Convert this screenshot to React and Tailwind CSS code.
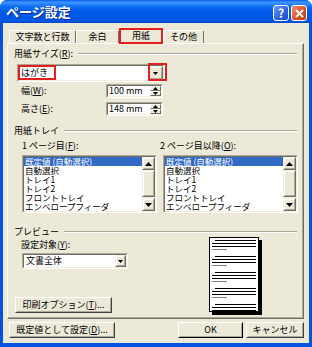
import React from "react";

const FONT = "font-['Noto_Sans_CJK_JP','Noto_Sans',sans-serif]";

const trayItems = [
  "既定値 (自動選択)",
  "自動選択",
  "トレイ1",
  "トレイ2",
  "フロントトレイ",
  "エンベロープフィーダ",
];

function U({ children }) {
  return <span className="underline underline-offset-1">{children}</span>;
}

function ArrowDown() {
  return (
    <svg width="7" height="4" viewBox="0 0 7 4">
      <path d="M0 0h7L3.5 4z" fill="#000" />
    </svg>
  );
}

function ArrowUp() {
  return (
    <svg width="7" height="4" viewBox="0 0 7 4">
      <path d="M0 4h7L3.5 0z" fill="#000" />
    </svg>
  );
}

function Sunken({ className = "", children }) {
  return (
    <div className={`shrink-0 border border-t-[#aca899] border-l-[#aca899] border-r-white border-b-white ${className}`}>
      <div className="flex h-full w-full border border-t-[#716f64] border-l-[#716f64] border-r-[#f1efe2] border-b-[#f1efe2] bg-white">
        {children}
      </div>
    </div>
  );
}

function Raised({ className = "", children }) {
  return (
    <div className={`shrink-0 border border-t-[#f1efe2] border-l-[#f1efe2] border-r-[#716f64] border-b-[#716f64] bg-[#ece9d8] ${className}`}>
      <div className="flex h-full w-full items-center justify-center border border-t-white border-l-white border-r-[#aca899] border-b-[#aca899]">
        {children}
      </div>
    </div>
  );
}

function Button({ className = "", children }) {
  return (
    <div className={`flex shrink-0 items-center justify-center border border-t-white border-l-white bg-[#ece9d8] ${className}`}>
      <div className="flex h-full w-full items-center justify-center border border-t-[#ece9d8] border-l-[#ece9d8] border-r-[#aca899] border-b-[#aca899] text-[9px] leading-[10px]">
        {children}
      </div>
    </div>
  );
}

function GroupHeader({ children }) {
  return (
    <div className="flex h-[10px] items-center">
      <span className="whitespace-nowrap pr-[5px] text-[9px] leading-[10px]">{children}</span>
      <div className="h-[2px] flex-1 border-t border-b border-t-[#aca899] border-b-white" />
    </div>
  );
}

function Spin({ value }) {
  return (
    <Sunken className="h-[14px] w-[57px]">
      <div className="flex-1 pl-[1px] text-[9px] leading-[10px]">{value}</div>
      <div className="flex w-[11px] flex-col">
        <div className="flex h-1/2 items-center justify-center border border-t-white border-l-white border-r-[#716f64] border-b-[#716f64] bg-[#ece9d8]">
          <svg width="5" height="3" viewBox="0 0 5 3">
            <path d="M0 3h5L2.5 0z" fill="#000" />
          </svg>
        </div>
        <div className="flex h-1/2 items-center justify-center border border-t-white border-l-white border-r-[#716f64] border-b-[#716f64] bg-[#ece9d8]">
          <svg width="5" height="3" viewBox="0 0 5 3">
            <path d="M0 0h5L2.5 3z" fill="#000" />
          </svg>
        </div>
      </div>
    </Sunken>
  );
}

function ListBox() {
  return (
    <Sunken className="h-[58px] w-[135px]">
      <div className="flex-1 overflow-hidden">
        {trayItems.map((t, i) => (
          <div
            key={t}
            className={`h-[9px] whitespace-nowrap pl-[1px] text-[8.5px] leading-[9px] ${i === 0 ? "bg-[#316ac5] text-white" : ""}`}
          >
            {t}
          </div>
        ))}
      </div>
      <div className="flex w-[13px] flex-col bg-[#f4f3ee]">
        <Raised className="h-[13px]">
          <ArrowUp />
        </Raised>
        <Raised className="h-[27px]" />
        <div className="flex-1" />
        <Raised className="h-[13px]">
          <ArrowDown />
        </Raised>
      </div>
    </Sunken>
  );
}

function PagePreview() {
  const groups = [0, 1, 2, 3, 4];
  return (
    <svg width="53" height="78" viewBox="0 0 53 78" className="block shrink-0">
      <rect x="3" y="3" width="50" height="75" fill="#000" />
      <rect x="0.5" y="0.5" width="49" height="74" fill="#fff" stroke="#000" />
      {groups.map((g) => {
        const y = 3.5 + g * 16;
        return (
          <g key={g}>
            <line x1="6" x2="47" y1={y} y2={y} stroke="#000" />
            <line x1="3" x2="47" y1={y + 3} y2={y + 3} stroke="#000" />
            <line x1="3" x2="47" y1={y + 6} y2={y + 6} stroke="#000" />
            {g < 4 && <line x1="3" x2="18" y1={y + 9} y2={y + 9} stroke="#808080" />}
          </g>
        );
      })}
    </svg>
  );
}

function TitleBar() {
  return (
    <div className="flex h-[23px] items-center justify-between rounded-t-[7px] bg-[linear-gradient(to_bottom,#0a5fe8_0%,#3d93ff_10%,#2b86fb_18%,#0b6af5_30%,#025de8_50%,#0057e3_70%,#0058e8_88%,#0049cc_100%)] pl-[6px] pr-[5px]">
      <span className="text-[13px] font-bold leading-none text-white [text-shadow:1px_1px_0_#0b2a8a]">
        ページ設定
      </span>
      <div className="flex gap-[2px] pt-[3px]">
        <div className="flex h-[16px] w-[16px] items-center justify-center rounded-[3px] border border-white bg-[linear-gradient(135deg,#6d9cf7,#2f63e4_55%,#1c4dcc)] text-[12px] font-bold leading-none text-white">
          ?
        </div>
        <div className="flex h-[16px] w-[16px] items-center justify-center rounded-[3px] border border-white bg-[linear-gradient(135deg,#f39070,#e0511f_55%,#c5390f)]">
          <svg width="9" height="9" viewBox="0 0 9 9">
            <path d="M1 1l7 7M8 1L1 8" stroke="#fff" strokeWidth="2" />
          </svg>
        </div>
      </div>
    </div>
  );
}

function Tab({ label, className = "" }) {
  return (
    <div className={`flex h-[13px] items-center justify-center rounded-t-[2px] border border-b-0 border-t-white border-l-white border-r-[#716f64] text-[9px] leading-[10px] ${className}`}>
      {label}
    </div>
  );
}

export default function App() {
  return (
    <div className={`h-[347px] w-[312px] ${FONT} text-black`}>
      <div className="flex h-full flex-col rounded-t-[7px] bg-[#0653e0]">
        <TitleBar />
        <div className="mx-[3px] mb-[4px] flex flex-1 flex-col bg-[#ece9d8] px-[4px] pt-[5px]">
          {/* tabs */}
          <div className="ml-[2px] flex h-[15px] items-end">
            <Tab label="文字数と行数" className="w-[67px]" />
            <Tab label="余白" className="w-[43px]" />
            <div className="relative z-10 -mb-px flex h-[16px] w-[44px] items-center justify-center border-2 border-[#e41f1f] bg-[#ece9d8] text-[9px] leading-[10px]">
              用紙
            </div>
            <Tab label="その他" className="w-[41px]" />
          </div>

          {/* tab panel */}
          <div className="flex h-[276px] w-[297px] flex-col border border-t-white border-l-white border-r-[#716f64] border-b-[#716f64] px-[6px] shadow-[inset_-1px_-1px_0_#aca899]">
            <div className="mt-[5px]">
              <GroupHeader>
                用紙サイズ(<U>R</U>):
              </GroupHeader>
            </div>

            <div className="relative ml-[3px] mt-[5px] h-[18px] w-[148px]">
              <Sunken className="h-full w-full">
                <div className="flex-1 pl-[2px] text-[9px] leading-[14px]">はがき</div>
                <Raised className="h-[14px] w-[15px]">
                  <svg width="5" height="3" viewBox="0 0 5 3">
                    <path d="M0 0h5L2.5 3z" fill="#000" />
                  </svg>
                </Raised>
              </Sunken>
              <div className="absolute left-[1px] top-[1px] h-[15px] w-[38px] border-2 border-[#e41f1f]" />
              <div className="absolute -right-[2px] -top-[1px] h-[18px] w-[19px] border-2 border-[#e41f1f]" />
            </div>

            <div className="mt-[2px] flex h-[14px] items-center pl-[7px]">
              <span className="w-[85px] text-[9px] leading-[10px]">
                幅(<U>W</U>):
              </span>
              <Spin value="100 mm" />
            </div>
            <div className="mt-[4px] flex h-[14px] items-center pl-[7px]">
              <span className="w-[85px] text-[9px] leading-[10px]">
                高さ(<U>E</U>):
              </span>
              <Spin value="148 mm" />
            </div>

            <div className="mt-[10px]">
              <GroupHeader>用紙トレイ</GroupHeader>
            </div>

            <div className="mt-[5px] flex h-[10px] pl-[8px] text-[9px] leading-[10px]">
              <span className="w-[138px] shrink-0">
                1 ページ目(<U>F</U>):
              </span>
              <span>
                2 ページ目以降(<U>O</U>):
              </span>
            </div>

            <div className="mt-[4px] flex gap-[6px] pl-[8px]">
              <ListBox />
              <ListBox />
            </div>

            <div className="mt-[14px]">
              <GroupHeader>プレビュー</GroupHeader>
            </div>

            <div className="flex items-start">
              <div className="flex w-[195px] shrink-0 flex-col items-start">
                <span className="ml-[7px] mt-[3px] h-[10px] text-[9px] leading-[10px]">
                  設定対象(<U>Y</U>):
                </span>
                <Sunken className="ml-[8px] mt-[3px] h-[16px] w-[106px]">
                  <div className="flex-1 pl-[2px] text-[9px] leading-[12px]">文書全体</div>
                  <Raised className="h-[12px] w-[11px]">
                    <svg width="5" height="3" viewBox="0 0 5 3">
                      <path d="M0 0h5L2.5 3z" fill="#000" />
                    </svg>
                  </Raised>
                </Sunken>
                <Button className="ml-[1px] mt-[28px] h-[16px] w-[97px] border-r-[#404040] border-b-[#404040]">
                  <span>
                    印刷オプション(<U>T</U>)...
                  </span>
                </Button>
              </div>
              <PagePreview />
            </div>
          </div>

          {/* bottom buttons */}
          <div className="mt-[3px] flex">
            <Button className="ml-[2px] h-[16px] w-[106px] border-r-[#404040] border-b-[#404040]">
              <span>
                既定値として設定(<U>D</U>)...
              </span>
            </Button>
            <Button className="ml-[63px] h-[16px] w-[65px] border-r-black border-b-black">OK</Button>
            <Button className="ml-[3px] h-[16px] w-[58px] border-r-[#404040] border-b-[#404040]">キャンセル</Button>
          </div>
        </div>
      </div>
    </div>
  );
}
